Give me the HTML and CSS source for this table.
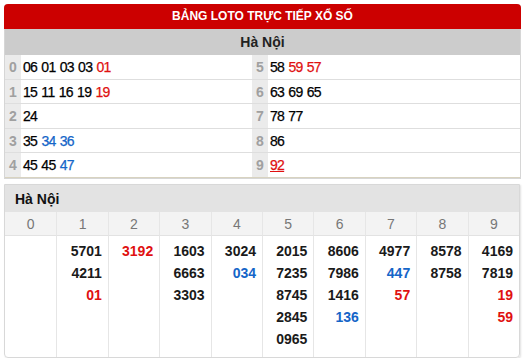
FILE: index.html
```html
<!DOCTYPE html>
<html lang="vi">
<head>
<meta charset="utf-8">
<title>Bảng loto</title>
<link rel="stylesheet" href="styles.css">
</head>
<body>
<div class="loto-box">
  <div class="title">BẢNG LOTO TRỰC TIẾP XỔ SỐ</div>
  <div class="sub">Hà Nội</div>
  <div class="rows">
    <div class="row">
      <div class="half left"><span class="d">0</span><span class="n">06 01 03 03 <span class="r">01</span></span></div>
      <div class="half right"><span class="d">5</span><span class="n">58 <span class="r">59</span> <span class="r">57</span></span></div>
    </div>
    <div class="row">
      <div class="half left"><span class="d">1</span><span class="n">15 11 16 19 <span class="r">19</span></span></div>
      <div class="half right"><span class="d">6</span><span class="n">63 69 65</span></div>
    </div>
    <div class="row">
      <div class="half left"><span class="d">2</span><span class="n">24</span></div>
      <div class="half right"><span class="d">7</span><span class="n">78 77</span></div>
    </div>
    <div class="row">
      <div class="half left"><span class="d">3</span><span class="n">35 <span class="b">34</span> <span class="b">36</span></span></div>
      <div class="half right"><span class="d">8</span><span class="n">86</span></div>
    </div>
    <div class="row last">
      <div class="half left"><span class="d">4</span><span class="n">45 45 <span class="b">47</span></span></div>
      <div class="half right"><span class="d">9</span><span class="n"><span class="r u">92</span></span></div>
    </div>
  </div>
</div>

<div class="tail-box">
  <div class="tail-head">Hà Nội</div>
  <div class="tail-grid">
    <div class="th">0</div><div class="th">1</div><div class="th">2</div><div class="th">3</div><div class="th">4</div>
    <div class="th">5</div><div class="th">6</div><div class="th">7</div><div class="th">8</div><div class="th">9</div>

    <div class="td"></div>
    <div class="td"><div>5701</div><div>4211</div><div class="r">01</div></div>
    <div class="td"><div class="r">3192</div></div>
    <div class="td"><div>1603</div><div>6663</div><div>3303</div></div>
    <div class="td"><div>3024</div><div class="b">034</div></div>
    <div class="td"><div>2015</div><div>7235</div><div>8745</div><div>2845</div><div>0965</div></div>
    <div class="td"><div>8606</div><div>7986</div><div>1416</div><div class="b">136</div></div>
    <div class="td"><div>4977</div><div class="b">447</div><div class="r">57</div></div>
    <div class="td"><div>8578</div><div>8758</div></div>
    <div class="td"><div>4169</div><div>7819</div><div class="r">19</div><div class="r">59</div></div>
  </div>
</div>
</body>
</html>
```

FILE: styles.css
```css
* { box-sizing: border-box; }
body {
  margin: 0;
  padding: 4px 2px 0 4px;
  background: #fff;
  font-family: "Liberation Sans", Arial, sans-serif;
  color: #111;
}
.loto-box {
  width: 517px;
  border: 1px solid #d6d6d6;
  border-top: 0;
  border-radius: 4px 4px 0 0;
}
.title {
  height: 25px;
  line-height: 25px;
  background: #cc0000;
  color: #fff;
  font-weight: bold;
  font-size: 12px;
  text-align: center;
  border-radius: 4px 4px 0 0;
  margin: 0 -1px;
}
.sub {
  height: 26px;
  line-height: 27px;
  background: #cccccc;
  color: #222;
  font-weight: bold;
  font-size: 14px;
  text-align: center;
}
.row {
  display: flex;
  height: 24.5px;
  border-bottom: 1px solid #dedede;
}
.row.last { border-bottom: 1px solid #d8d3c0; }
.half {
  display: flex;
  align-items: stretch;
}
.half.left { width: 247px; }
.half.right { flex: 1; }
.d {
  width: 16px;
  background: #ebebeb;
  color: #a0a0a0;
  font-weight: bold;
  font-size: 14px;
  text-align: center;
  line-height: 24px;
}
.n {
  padding-left: 2px;
  font-size: 14px;
  letter-spacing: -0.7px;
  word-spacing: 1px;
  line-height: 24px;
  color: #000;
  -webkit-text-stroke: 0.25px #000;
}
.n .r { -webkit-text-stroke: 0.25px #e01010; }
.n .b { -webkit-text-stroke: 0.25px #1565c8; }
.r { color: #e01010; }
.b { color: #1565c8; }
.u { text-decoration: underline; }

.tail-box {
  margin-top: 5px;
  width: 516px;
  border: 1px solid #d8d8d8;
  border-radius: 0 0 4px 4px;
  box-shadow: 1px 1px 2px rgba(0,0,0,0.12);
}
.tail-head {
  height: 27px;
  line-height: 28px;
  background: #e3e3e3;
  padding-left: 10px;
  font-weight: bold;
  font-size: 14px;
  color: #111;
}
.tail-grid {
  display: grid;
  grid-template-columns: repeat(10, 1fr);
}
.th {
  height: 24px;
  line-height: 24px;
  background: #f3f3f3;
  color: #777;
  font-size: 14px;
  text-align: center;
  border-left: 1px solid #e6e6e6;
  border-bottom: 1px solid #e2e2e2;
}
.td {
  height: 121px;
  padding: 4px 6px 0 0;
  text-align: right;
  font-weight: bold;
  font-size: 14px;
  line-height: 22px;
  color: #1a1a1a;
  border-left: 1px solid #e6e6e6;
}
.th:first-child, .td:nth-child(11) { border-left: 0; }
```
